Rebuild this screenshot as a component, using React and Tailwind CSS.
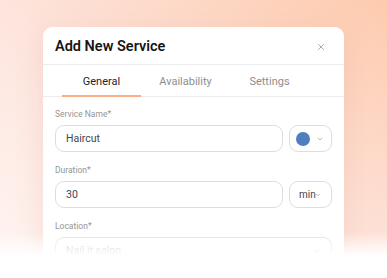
import React from 'react';
import { X, ChevronDown } from 'lucide-react';

const Label = ({ children }) => (
  <div className="h-[14px] text-[8.5px] leading-[14px] text-[#959595]">{children}</div>
);

const App = () => {
  return (
    <div
      className="relative w-[387px] h-[278px] overflow-hidden bg-gradient-to-bl from-[#fdcbae] via-[#fde4dc] to-[#fff5f2]"
      style={{ fontFamily: 'Roboto, "Noto Sans", sans-serif' }}
    >
      <div className="ml-[43px] mt-[27px] w-[301px] rounded-[9px] bg-white shadow-[0_6px_28px_rgba(210,130,110,0.18)]">
        {/* header */}
        <div className="flex h-[38px] items-center justify-between border-b border-[#ececec] pl-[12px] pr-[18px] pt-[3px]">
          <h2 className="text-[14.5px] font-semibold text-[#161616]">Add New Service</h2>
          <X className="h-[10px] w-[10px] text-[#9a9a9a]" strokeWidth={2} />
        </div>

        {/* tabs */}
        <div className="flex h-[32px] gap-[5px] border-b border-[#ececec] pl-[19px]">
          <div className="-mb-px flex w-[79px] items-center justify-center border-b-2 border-[#fbae88] pt-[4px] text-[11px] text-[#1f1f1f]">
            General
          </div>
          <div className="flex w-[79px] items-center justify-center pt-[3px] text-[11px] text-[#8e8e8e]">Availability</div>
          <div className="flex w-[79px] items-center justify-center pt-[3px] text-[11px] text-[#8e8e8e]">Settings</div>
        </div>

        {/* form */}
        <div className="px-[12px] pt-[10px] pb-[20px]">
          <Label>Service Name*</Label>
          <div className="mt-[4px] flex gap-[6px]">
            <div className="flex h-[27px] w-[228px] items-center rounded-[9px] border border-[#dedede] px-[10px] text-[10.5px] text-[#44444f]">
              Haircut
            </div>
            <div className="flex h-[27px] flex-1 items-center rounded-[9px] border border-[#dedede] pl-[6px]">
              <span className="h-[14px] w-[14px] rounded-full bg-[#4f7fbf]" />
              <ChevronDown className="ml-[6px] h-[8px] w-[8px] text-[#9a9a9a]" strokeWidth={2} />
            </div>
          </div>

          <div className="mt-[11px]">
            <Label>Duration*</Label>
          </div>
          <div className="mt-[4px] flex gap-[6px]">
            <div className="flex h-[27px] w-[228px] items-center rounded-[9px] border border-[#dedede] px-[10px] text-[10.5px] text-[#44444f]">
              30
            </div>
            <div className="flex h-[27px] flex-1 items-center rounded-[9px] border border-[#dedede] pl-[9px] text-[10px] text-[#44444f]">
              min
              <ChevronDown className="-ml-[1px] h-[6px] w-[6px] text-[#8a8a8a]" strokeWidth={2.5} />
            </div>
          </div>

          <div className="mt-[11px]">
            <Label>Location*</Label>
          </div>
          <div className="mt-[4px] flex h-[27px] items-center justify-between rounded-[9px] border border-[#dedede] px-[10px] text-[10.5px] text-[#b5b5b5]">
            Nail it salon
            <ChevronDown className="h-[8px] w-[8px] text-[#9a9a9a]" strokeWidth={2} />
          </div>
        </div>
      </div>

      {/* fade to white over the bottom */}
      <div className="absolute bottom-0 left-0 h-[46px] w-full bg-gradient-to-b from-[rgba(255,255,255,0)] via-white via-[52%] to-white" />
    </div>
  );
};

export default App;
